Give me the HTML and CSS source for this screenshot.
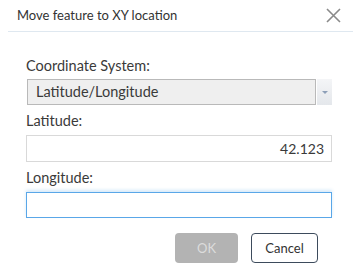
FILE: index.html
```html
<!DOCTYPE html>
<html lang="en">
<head>
  <meta charset="UTF-8" />
  <title>Move feature to XY location</title>
  <link rel="stylesheet" href="styles.css">
</head>
<body>
  <div class="dialog">
    <div class="header">
      <span class="title">Move feature to XY location</span>
      <svg class="close" width="15" height="15" viewBox="0 0 15 15">
        <path d="M1 1 L14 14 M14 1 L1 14" stroke="#8a8a8a" stroke-width="1.6" fill="none" />
      </svg>
    </div>
    <div class="content">
      <div class="label first">Coordinate System:</div>
      <div class="select-row">
        <div class="select">Latitude/Longitude</div>
        <div class="arrow"><span class="tri"></span></div>
      </div>
      <div class="label">Latitude:</div>
      <div class="input value">42.123</div>
      <div class="label">Longitude:</div>
      <div class="input focused"></div>
      <div class="actions">
        <button class="btn ok">OK</button>
        <button class="btn cancel">Cancel</button>
      </div>
    </div>
  </div>
</body>
</html>
```

FILE: styles.css
```css
* {
  margin: 0;
  padding: 0;
  box-sizing: border-box;
}

body {
  font-family: "Lato", "Open Sans", sans-serif;
  background: #fff;
  color: #3a3a3a;
  font-size: 14.5px;
}

.header {
  display: flex;
  justify-content: space-between;
  align-items: center;
  height: 32px;
  margin-left: 8px;
  padding: 0 12px 1px 9px;
  border-bottom: 1px solid #dfe8f0;
}

.title {
  font-size: 13px;
  color: #333;
}

.content {
  padding: 0 21px 0 26px;
}

.label {
  height: 16px;
  line-height: 16px;
  margin-top: 8px;
  margin-bottom: 6px;
}

.label.first {
  margin-top: 26px;
  margin-bottom: 5px;
}

.select-row {
  display: flex;
  height: 26px;
}

.select {
  flex: 1;
  margin-left: 1px;
  border: 1px solid #b9b9b9;
  background: #efefef;
  line-height: 24px;
  padding-left: 8px;
}

.arrow {
  width: 15px;
  margin-left: 1px;
  background: linear-gradient(#f4f5f7, #e4e7eb);
  display: flex;
  justify-content: center;
  align-items: center;
}

.tri {
  width: 0;
  height: 0;
  border-left: 3px solid transparent;
  border-right: 3px solid transparent;
  border-top: 3px solid #8d9fb8;
}

.input {
  height: 27px;
  border: 1px solid #d9d9d9;
  line-height: 25px;
  padding: 0 7px;
  text-align: right;
  font-size: 14px;
}

.input.focused {
  border-color: #5aa7e8;
  box-shadow: 0 -2px 3px rgba(90, 167, 232, 0.25);
  height: 26px;
}

.actions {
  display: flex;
  justify-content: flex-end;
  gap: 13px;
  margin-top: 15px;
  padding-right: 14px;
}

.btn {
  height: 30px;
  border-radius: 4px;
  font-family: inherit;
  font-size: 13px;
}

.ok {
  width: 63px;
  background: #b3b3b3;
  color: #dcdcdc;
  border: none;
}

.cancel {
  width: 67px;
  background: #fff;
  color: #333;
  border: 1px solid #3d4b5c;
}
```
